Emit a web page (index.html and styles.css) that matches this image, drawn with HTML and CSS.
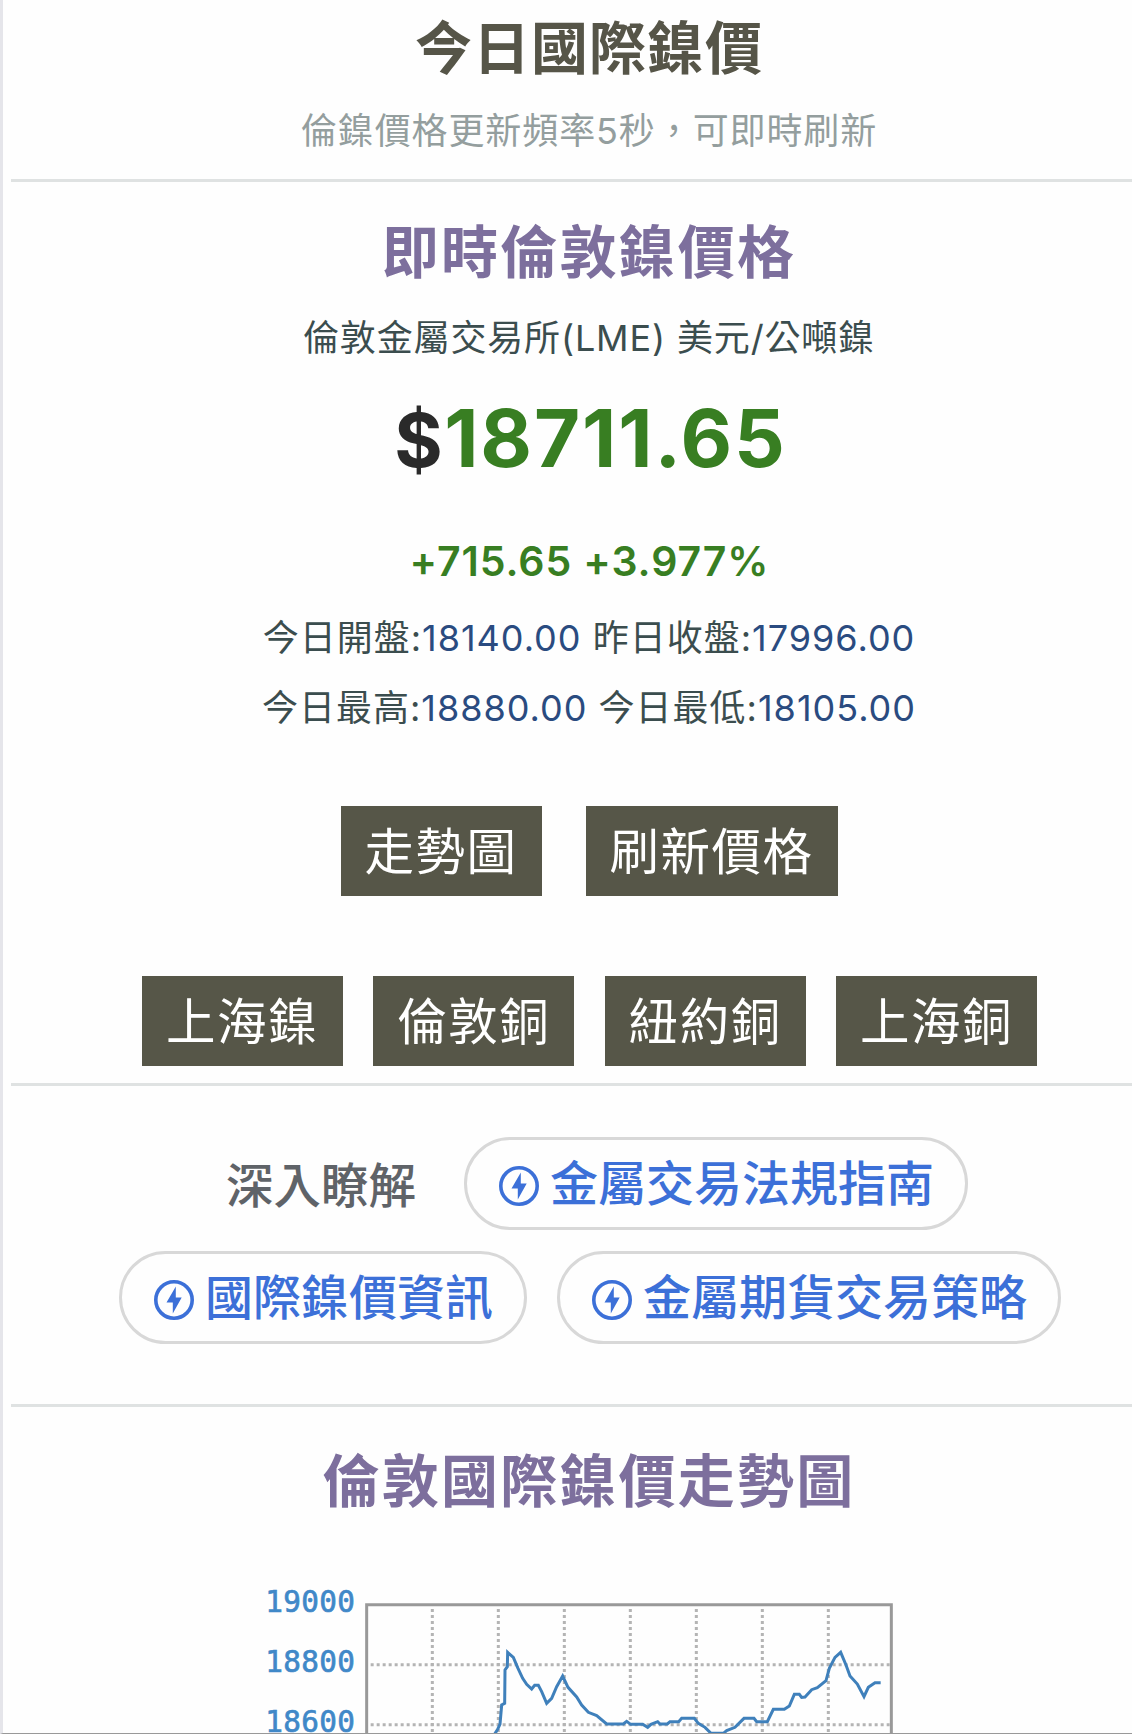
FILE: index.html
```
<!DOCTYPE html>
<html lang="zh-Hant">
<head>
    <meta charset="UTF-8">
    <meta name="viewport" content="width=device-width, initial-scale=1.0">
    <title>今日國際鎳價</title>
    <link rel="stylesheet" href="styles.css">
</head>
<body>

    <div class="container">
        <header class="page-head">
            <h1>今日國際鎳價</h1>
            <p class="subtitle">倫鎳價格更新頻率5秒，可即時刷新</p>
        </header>

        <section class="quote">
            <h2>即時倫敦鎳價格</h2>
            <p class="market">倫敦金屬交易所(LME) 美元/公噸鎳</p>
            <div class="price"><span class="currency">$</span>18711.65</div>
            <div class="change">+715.65 +3.977%</div>
            <p class="detail">今日開盤:<span>18140.00</span> 昨日收盤:<span>17996.00</span></p>
            <p class="detail detail-range">今日最高:<span>18880.00</span> 今日最低:<span>18105.00</span></p>

            <div class="buttons main-buttons">
                <button type="button">走勢圖</button>
                <button type="button">刷新價格</button>
            </div>
            <div class="buttons">
                <button type="button">上海鎳</button>
                <button type="button">倫敦銅</button>
                <button type="button">紐約銅</button>
                <button type="button">上海銅</button>
            </div>
        </section>

        <svg class="symbols" width="0" height="0">
            <symbol id="bolt" viewBox="0 0 40 40">
                <circle cx="20" cy="20" r="18.2" fill="none" stroke="currentColor" stroke-width="3.6"/>
                <path d="M21.8 6.5L12.5 22.5H18.8V33.5L27.7 17.5H21.8Z" fill="currentColor"/>
            </symbol>
        </svg>

        <section class="related">
            <div class="related-row related-first">
                <span class="related-label">深入瞭解</span>
                <a class="pill"><svg><use href="#bolt"/></svg>金屬交易法規指南</a>
            </div>
            <div class="related-row">
                <a class="pill"><svg><use href="#bolt"/></svg>國際鎳價資訊</a>
                <a class="pill"><svg><use href="#bolt"/></svg>金屬期貨交易策略</a>
            </div>
        </section>

        <section class="trend">
            <h2>倫敦國際鎳價走勢圖</h2>
            <svg class="chart" viewBox="0 0 2100 492">
                <g class="axis">
                    <text x="76" y="126">19000</text>
                    <text x="76" y="306">18800</text>
                    <text x="76" y="486">18600</text>
                </g>
                <g class="grid">
                    <path d="M392 284H1950M392 464H1950"/>
                    <path d="M577 117V492M775 117V492M973 117V492M1171 117V492M1369 117V492M1567 117V492M1765 117V492"/>
                </g>
                <path class="frame" d="M380 492V104H1954V492"/>
                <polyline class="line" points="764,492 773,478 780,462 785,405 794,400 795,300 802,290 803,247 820,262 834,295 848,325 860,343 875,357 884,346 895,346 905,365 920,400 935,385 950,350 968,318 984,352 1010,381 1025,405 1045,427 1070,437 1100,462 1150,462 1160,454 1172,463 1208,463 1223,472 1233,463 1253,455 1260,462 1282,462 1290,455 1316,455 1325,445 1363,445 1375,460 1395,472 1413,490 1450,490 1460,482 1485,472 1512,445 1542,445 1550,455 1582,455 1600,418 1633,418 1648,408 1663,373 1678,373 1685,382 1695,381 1715,359 1732,353 1758,332 1768,295 1785,262 1802,247 1818,285 1830,318 1852,342 1872,380 1885,352 1905,338 1922,338"/>
            </svg>
        </section>
    </div>

</body>
</html>
```
FILE: styles.css
```
* {
    box-sizing: border-box;
}

html {
    overflow: hidden;
}

body {
    font-family: Inter, "Noto Sans CJK TC", sans-serif;
    background-color: #fefefe;
    margin: 0;
    height: 1734px;
    overflow: hidden;
    border-left: 3px solid #e5e5ea;
    border-bottom: 1px solid #999;
}

.container {
    width: 1156px;
    margin-left: 8px;
    text-align: center;
}

h1, h2, p {
    margin: 0;
}

h1, h2 {
    font-size: 57px;
    font-weight: 700;
    line-height: 80px;
    letter-spacing: 2.2px;
}

h1 {
    color: #565548;
    letter-spacing: 1px;
}

h2 {
    color: #7d6f9d;
}

.page-head {
    height: 182px;
    padding-top: 9px;
    border-bottom: 3px solid #dfe2e2;
}

.subtitle {
    margin-top: 17px;
    font-size: 36px;
    line-height: 50px;
    letter-spacing: 0.9px;
    color: #949e9e;
}

.quote {
    height: 904px;
    padding-top: 31px;
    border-bottom: 3px solid #dfe2e2;
}

.market {
    margin-top: 20px;
    font-size: 36px;
    line-height: 50px;
    letter-spacing: 0.85px;
    color: #3b4d4e;
}

.price {
    margin-top: 25px;
    padding-left: 3px;
    font-size: 79.5px;
    font-weight: 700;
    line-height: 100px;
    letter-spacing: 1.9px;
    color: #387e22;
}

.currency {
    color: #2a2a2a;
    font-size: 74px;
    line-height: 1;
    letter-spacing: 1.5px;
}

.change {
    margin-top: 43px;
    padding-left: 1px;
    font-size: 41px;
    font-weight: 600;
    line-height: 60px;
    letter-spacing: 0.9px;
    color: #387e22;
}

.detail {
    margin-top: 12px;
    font-size: 36px;
    line-height: 70px;
    letter-spacing: 1px;
    color: #3b4d4e;
}

.detail span {
    color: #2a4b80;
}

.detail-range {
    margin-top: 0;
}

.buttons {
    display: flex;
    justify-content: center;
    gap: 30.3px;
    margin-top: 80px;
    padding-left: 1px;
}

.main-buttons {
    gap: 44px;
    margin-top: 63px;
    padding-left: 0;
}

button {
    height: 90px;
    padding: 2px 24px 0;
    border: none;
    background-color: #565648;
    color: #fff;
    font-family: inherit;
    font-size: 49.5px;
    letter-spacing: 1.5px;
    line-height: 88px;
}

.symbols {
    display: block;
}

.related {
    height: 321px;
    padding-top: 51px;
    border-bottom: 3px solid #dfe2e2;
}

.related-row {
    display: flex;
    justify-content: center;
    align-items: center;
    gap: 30px;
    margin-bottom: 21px;
    padding-left: 2px;
    font-size: 48px;
    font-weight: 500;
}

.related-first {
    padding-left: 16px;
}

.related-label {
    margin-right: 18px;
    padding-bottom: 2px;
    color: #5f6368;
    font-size: 47.5px;
}

.pill {
    display: flex;
    align-items: center;
    height: 93px;
    padding: 0 31px 0 32px;
    border: 3px solid #d8d8d8;
    border-radius: 47px;
    color: #3c70d8;
    line-height: 80px;
}

.pill svg {
    width: 40px;
    height: 40px;
    margin: 5px 11px 0 0;
}

.trend {
    padding-top: 35px;
}

.chart {
    display: block;
    width: 700px;
    height: 164px;
    margin: 48px 0 0 229px;
}

.axis text {
    font-family: "DejaVu Sans Mono", monospace;
    font-size: 88px;
    letter-spacing: 1px;
    fill: #4088c8;
    stroke: #4088c8;
    stroke-width: 2;
}

.frame {
    fill: none;
    stroke: #999;
    stroke-width: 9;
}

.grid path {
    fill: none;
    stroke: #b4b4b4;
    stroke-width: 9;
    stroke-dasharray: 9 9;
}

.line {
    fill: none;
    stroke: #3f80bb;
    stroke-width: 9;
}
```
